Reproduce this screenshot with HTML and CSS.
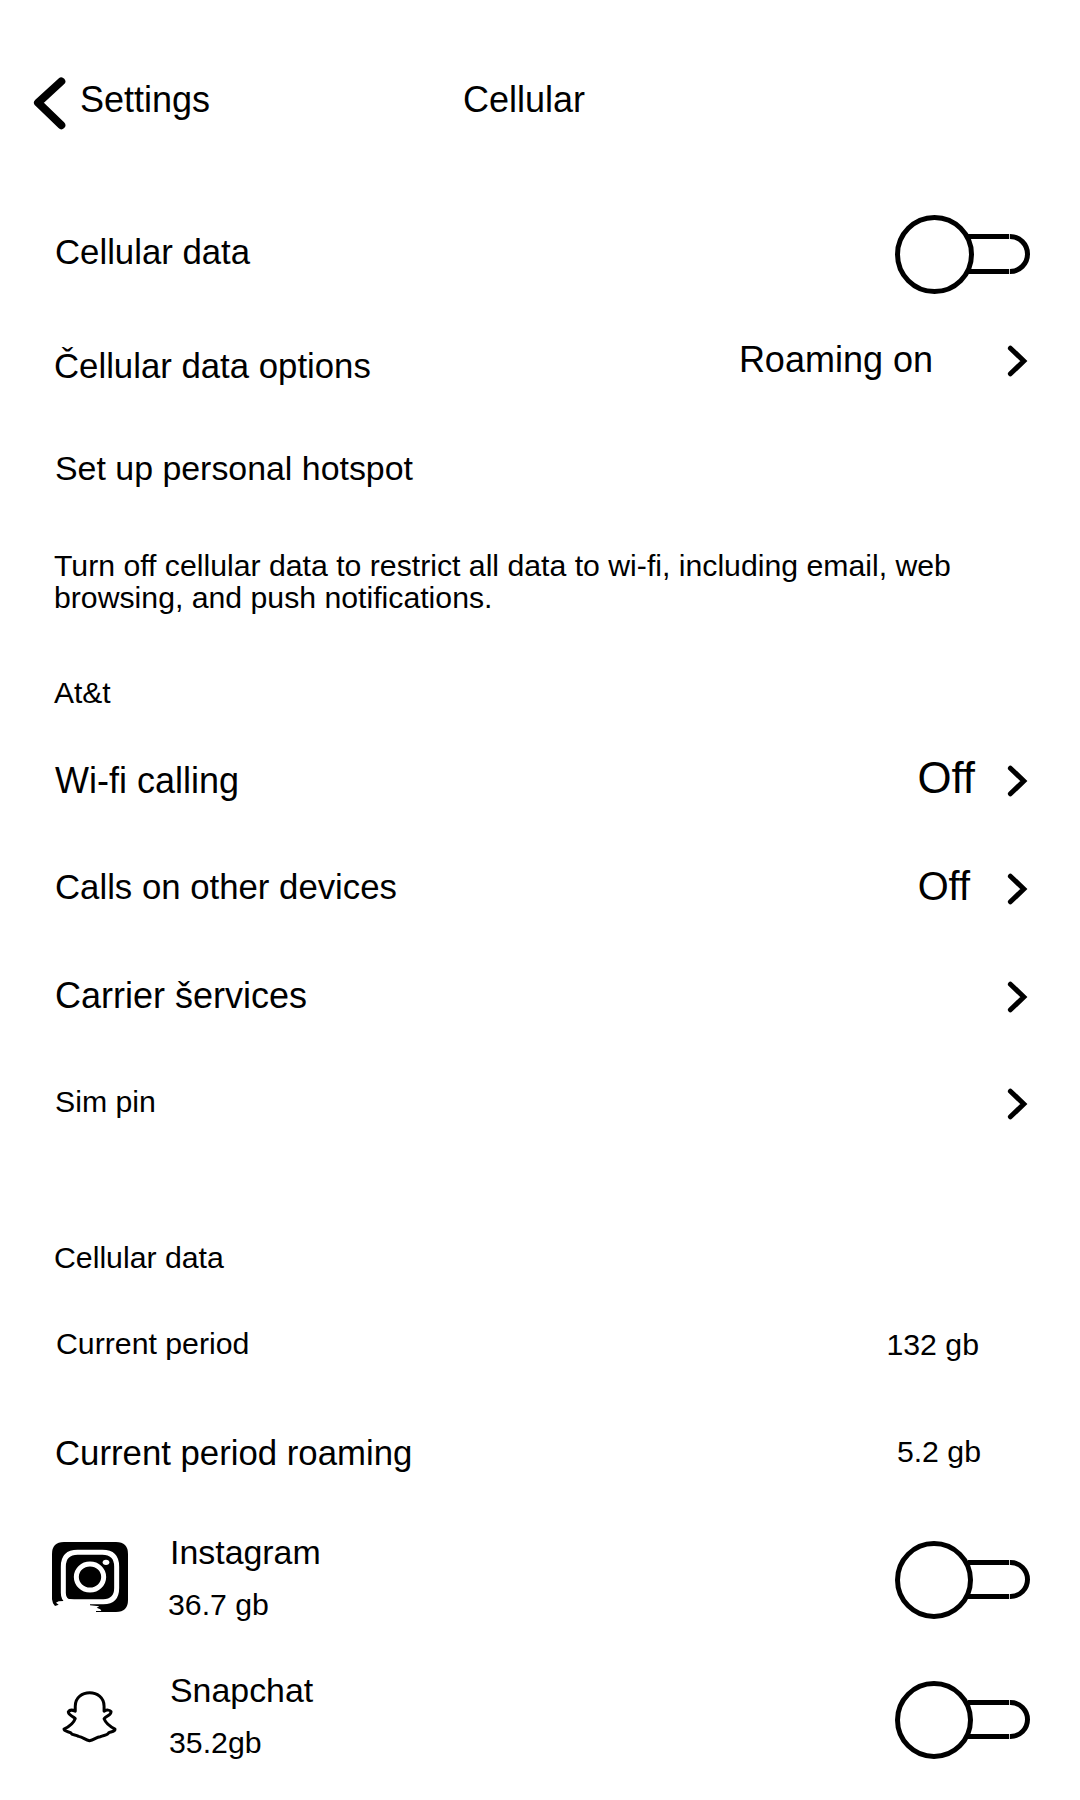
FILE: index.html
```html
<!DOCTYPE html>
<html lang="en">
<head>
<meta charset="utf-8">
<title>Cellular</title>
<link rel="stylesheet" href="styles.css">
</head>
<body>
<svg class="defs" aria-hidden="true">
  <symbol id="chevron" viewBox="0 0 22 34"><path d="M4.4 4.2 17.8 17 4.4 29.8" fill="none" stroke="#000" stroke-width="5" stroke-linecap="round"/></symbol>
  <symbol id="toggle" viewBox="0 0 136 78"><g fill="none" stroke="#000" stroke-width="5"><circle cx="39" cy="39" r="36.5"/><path d="M73 21.5H114.2M73 55.5H114.2M115 21.5H115.5A17 17 0 0 1 115.5 55.5H115"/></g></symbol>
</svg>

<header class="row header">
  <svg class="back" viewBox="0 0 34 54"><path d="M29.3 4.4 6 25.7 29.3 48.2" fill="none" stroke="#000" stroke-width="8" stroke-linecap="round" stroke-linejoin="round"/></svg>
  <span class="text xl back-label">Settings</span>
  <h1 class="text xl title">Cellular</h1>
</header>

<main>
  <div class="row data">
    <span class="text lg label">Cellular data</span>
    <svg class="toggle big" viewBox="0 0 136 79"><g fill="none" stroke="#000" stroke-width="5"><circle cx="39.5" cy="39.5" r="37"/><path d="M73 21.5H114.2M73 56.5H114.2M115 21.5A17.5 17.5 0 0 1 115 56.5"/></g></svg>
  </div>
  <div class="row options">
    <span class="text lg label">Čellular data options</span>
    <span class="text xl value">Roaming on</span>
    <svg class="chevron"><use href="#chevron"/></svg>
  </div>
  <div class="row hotspot"><span class="text md label">Set up personal hotspot</span></div>
  <p class="note">Turn off cellular data to restrict all data to wi-fi, including email, web<br>browsing, and push notifications.</p>
  <div class="row carrier-name"><span class="text sm label">At&amp;t</span></div>
  <div class="row wifi">
    <span class="text xl label">Wi-fi calling</span>
    <span class="text off-lg value">Off</span>
    <svg class="chevron"><use href="#chevron"/></svg>
  </div>
  <div class="row calls">
    <span class="text lg label">Calls on other devices</span>
    <span class="text off-md value">Off</span>
    <svg class="chevron"><use href="#chevron"/></svg>
  </div>
  <div class="row services">
    <span class="text xl label">Carrier šervices</span>
    <svg class="chevron"><use href="#chevron"/></svg>
  </div>
  <div class="row sim">
    <span class="text sm label">Sim pin</span>
    <svg class="chevron"><use href="#chevron"/></svg>
  </div>
  <div class="row usage"><span class="text sm label">Cellular data</span></div>
  <div class="row period">
    <span class="text sm label">Current period</span>
    <span class="text sm value">132 gb</span>
  </div>
  <div class="row roaming">
    <span class="text lg label">Current period roaming</span>
    <span class="text sm value">5.2 gb</span>
  </div>
  <div class="row app instagram">
    <svg class="icon" viewBox="36 66 228 210">
      <path d="M72 66H228Q264 66 264 102V240Q264 276 228 276H168V273H184L181 268 170 263 178 259 150 256V252L78 238 70 243 56 244 48 248 56 254 45 258 39 250 36 238V102Q36 66 72 66Z"/>
      <path d="M82 243Q70 236 70 218V140Q70 97 113 97H187Q230 97 230 140V204Q230 245 190 245H84" fill="none" stroke="#fff" stroke-width="15"/>
      <path d="M76 237 90 237 150 252V262H76Z" fill="#fff"/>
      <ellipse cx="150" cy="171" rx="41" ry="39" fill="none" stroke="#fff" stroke-width="15"/>
      <ellipse cx="198" cy="127" rx="10" ry="8" fill="#fff"/>
    </svg>
    <div class="app-text"><span class="text md">Instagram</span><span class="text sm size">36.7 gb</span></div>
    <svg class="toggle"><use href="#toggle"/></svg>
  </div>
  <div class="row app snapchat">
    <svg class="icon" viewBox="64 88 172 160">
      <path d="M107 152V137C107 83 194 83 194 137V152C202 147 212 148 215 153 216 163 202 166 194 175 200 191 211 198 227 206 228 214 213 214 208 217 204 226 193 224 183 229 170 230 164 239 150 241 137 239 131 230 117 228 107 222 98 226 93 217 88 213 73 214 73 206 90 198 101 191 107 174 99 166 86 164 86 154 90 148 99 148 107 152Z" fill="none" stroke="#000" stroke-width="9" stroke-linejoin="round"/>
    </svg>
    <div class="app-text"><span class="text md">Snapchat</span><span class="text sm size">35.2gb</span></div>
    <svg class="toggle"><use href="#toggle"/></svg>
  </div>
</main>
</body>
</html>
```
FILE: styles.css
```css
* { box-sizing: border-box; }
body {
  margin: 0;
  width: 1080px;
  height: 1800px;
  overflow: hidden;
  background: #fff;
  color: #000;
  font-family: "Liberation Sans", Arial, sans-serif;
}
.defs { display: none; }
svg { display: block; flex: none; }

/* Rows and type scale */
.row { display: flex; align-items: flex-start; padding-left: 55px; padding-right: 48px; }
.text { display: block; line-height: 50px; white-space: nowrap; font-weight: 400; }
.xl { font-size: 36px; }
.lg { font-size: 34.75px; }
.md { font-size: 33.9px; }
.sm { font-size: 30.25px; }
.off-lg { font-size: 43.8px; }
.off-md { font-size: 39.8px; }
.label { flex: 1; }
.chevron { width: 22px; height: 34px; margin-right: 4px; }
.toggle { width: 136px; height: 78px; margin-left: auto; margin-right: 1px; }
.toggle.big { height: 79px; }

/* Header */
.header { height: 160px; padding-left: 32px; }
.back { width: 34px; height: 54px; margin-top: 77px; }
.back-label { width: 383px; margin: 75px 0 0 14px; }
.title { margin: 75px 0 0; }

/* Settings */
.data { height: 150px; }
.data .label { margin-top: 67px; }
.data .toggle { margin-top: 55px; }
.options { height: 110px; padding-left: 54px; }
.options .label { margin-top: 31px; }
.options .value { margin: 25px 73px 0 0; }
.options .chevron { margin-top: 34px; }
.hotspot { height: 100px; }
.hotspot .label { margin-top: 23px; }
.note {
  height: 130px;
  margin: 0;
  padding: 30px 0 0 54px;
  font-size: 30.22px;
  line-height: 32px;
  white-space: nowrap;
}
.carrier-name { height: 80px; padding-left: 54px; }
.carrier-name .label { margin-top: 18px; font-size: 30px; }
.wifi { height: 105px; }
.wifi .label { margin-top: 26px; }
.wifi .value { margin: 23px 31px 0 0; }
.wifi .chevron { margin-top: 34px; }
.calls { height: 105px; }
.calls .label { margin-top: 27px; }
.calls .value { margin: 26px 36px 0 0; }
.calls .chevron { margin-top: 37px; }
.services { height: 110px; }
.services .label { margin-top: 31px; }
.services .chevron { margin-top: 40px; }
.sim { height: 100px; }
.sim .label { margin-top: 27px; }
.sim .chevron { margin-top: 37px; }

/* Data usage */
.usage { height: 150px; padding-left: 54px; }
.usage .label { margin-top: 83px; }
.period { height: 100px; padding-left: 56px; padding-right: 101px; }
.period .label { margin-top: 19px; }
.period .value { margin-top: 20px; }
.roaming { height: 110px; padding-right: 99px; }
.roaming .label { margin-top: 28px; }
.roaming .value { margin-top: 27px; }

/* Apps */
.app-text { display: flex; flex-direction: column; }
.instagram { height: 140px; padding-left: 52px; }
.instagram .icon { width: 76px; height: 70px; margin-top: 32px; }
.instagram .app-text { margin: 17px 0 0 42px; }
.instagram .size { margin: 3px 0 0 -2px; }
.instagram .toggle { margin-top: 31px; }
.snapchat { height: 150px; padding-left: 61px; }
.snapchat .icon { width: 57px; height: 53px; margin-top: 40px; }
.snapchat .app-text { margin: 15px 0 0 52px; }
.snapchat .size { margin: 3px 0 0 -1px; }
.snapchat .toggle { margin-top: 31px; }
```
